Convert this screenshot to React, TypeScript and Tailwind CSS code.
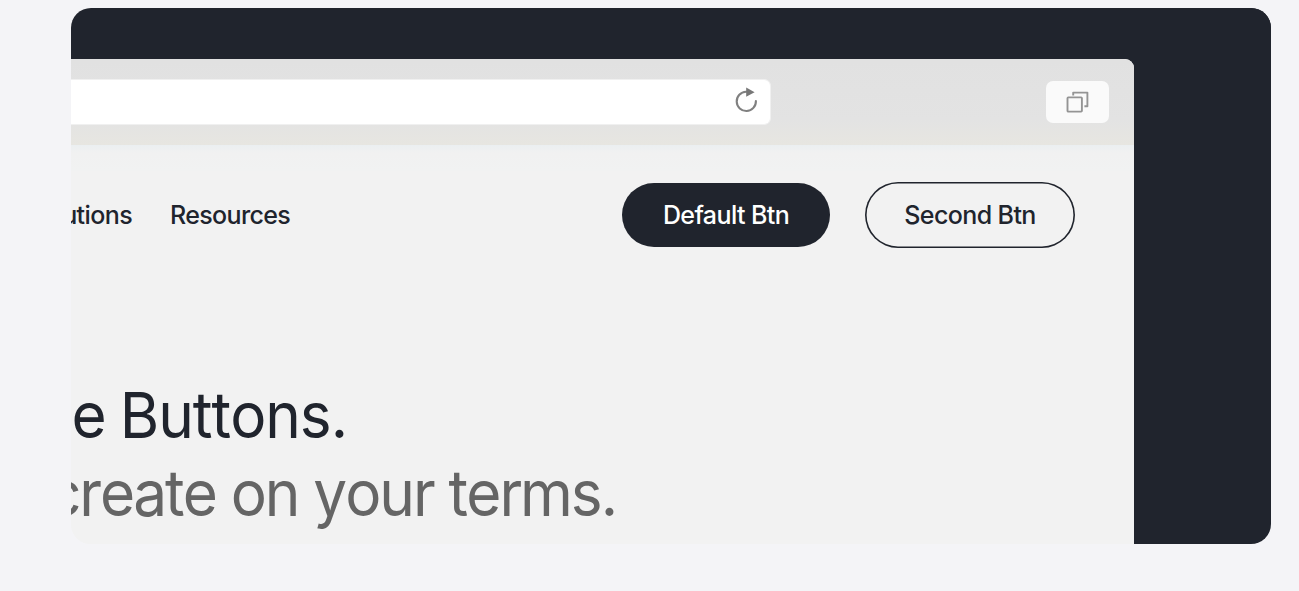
import { clsx } from 'clsx'

function ReloadIcon() {
  return (
    <svg viewBox="0 0 26 28" className="h-7 w-[26px]" fill="none">
      <path d="M15.5 4.8 H13 A9.6 9.6 0 1 0 22.9 14" stroke="#808080" strokeWidth="2.1" strokeLinecap="round" />
      <path d="M13.2 0.6 L21.6 5.2 L13.2 9.8 Z" fill="#777" />
    </svg>
  )
}

function TabsIcon() {
  return (
    <svg viewBox="0 0 24 24" className="h-6 w-6" fill="none" stroke="#949494" strokeWidth="1.9" strokeLinejoin="round">
      <rect x="1.5" y="7.4" width="14.4" height="14.2" rx="0.8" />
      <path d="M7.2 5.4V2.6H21.4V16.2H18.4" />
    </svg>
  )
}

function BrowserBar() {
  return (
    <div className="flex h-[86px] items-start bg-linear-to-b from-[#e1e1e1] via-[#e3e3e3] via-70% to-[#e7e6e1]">
      <div className="mt-[19.5px] flex h-[46px] w-[699.5px] items-center justify-end rounded-r-[7px] border border-l-0 border-[#f0f0f0] bg-white pr-[11px] pb-px">
        <ReloadIcon />
      </div>
      <div className="mt-[22px] mr-[25px] ml-auto flex h-[42px] w-[63px] items-center justify-center rounded-[7px] bg-[#fafafa]">
        <TabsIcon />
      </div>
    </div>
  )
}

function PillButton({ label, outlined = false }: { label: string; outlined?: boolean }) {
  return (
    <button
      type="button"
      className={clsx(
        'flex items-center justify-center rounded-full pt-[2px] font-medium whitespace-nowrap',
        outlined ? 'h-[66px] w-[210px] shadow-[inset_0_0_0_1.6px_#20242d]' : 'h-16 w-52 bg-[#20242d] text-white',
      )}
    >
      {label}
    </button>
  )
}

export default function App() {
  return (
    <main className="h-[591px] w-[1299px] overflow-hidden bg-[#f4f4f7] pt-2 pl-[71px] font-['Inter',sans-serif] text-[#20242d]">
      <div className="h-[536px] w-[1200px] overflow-hidden rounded-[20px] bg-[linear-gradient(90deg,#f2f2f2_50%,#20242d_50%)]">
        <div className="h-[51px] bg-[#20242d]" />
        <section className="h-[485px] w-[1063px] overflow-hidden rounded-tr-[9px] bg-[#f2f2f2]">
          <BrowserBar />
          <div className="h-[26px] bg-linear-to-b from-[#ebeff1] via-[#f1f1f1] via-30% to-[#f1f2f2]" />
          <header className="mt-[11px] flex h-[66px] items-center text-[25px] tracking-[-0.6px]">
            <nav className="flex pt-[2px] font-medium">
              <a className="flex w-[61px] justify-end whitespace-nowrap">utions</a>
              <a className="ml-[38px] tracking-[-0.65px]">Resources</a>
            </nav>
            <div className="mr-[59px] ml-auto flex items-center gap-[35px]">
              <PillButton label="Default Btn" />
              <PillButton label="Second Btn" outlined />
            </div>
          </header>
          <div className="mt-[127.5px] text-[63.5px] leading-[78px] font-[430] whitespace-nowrap [font-kerning:none]">
            <h1 className="flex w-[276px] origin-right scale-x-95 justify-end tracking-[-1.1px] [word-spacing:-2px]">
              e Buttons.
            </h1>
            <p className="flex w-[545px] origin-right scale-x-95 justify-end tracking-[-2.15px] text-[#656565]">
              create on your terms.
            </p>
          </div>
        </section>
      </div>
    </main>
  )
}
